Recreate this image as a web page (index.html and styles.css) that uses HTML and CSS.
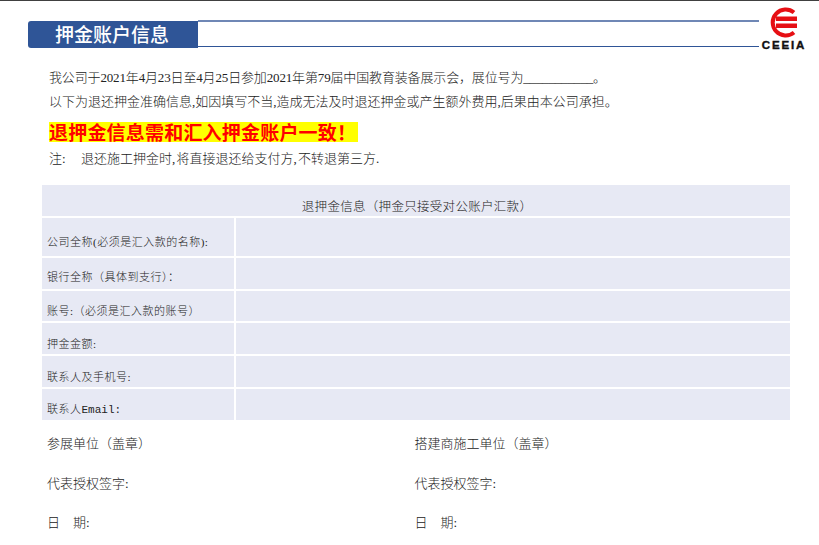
FILE: index.html
```html
<!DOCTYPE html>
<html lang="zh-CN">
<head>
<meta charset="utf-8">
<title>押金账户信息</title>
<link rel="stylesheet" href="styles.css">
</head>
<body>
<div class="page">
  <header class="head">
    <div class="title">押金账户信息</div>
    <div class="rule-box"></div>
    <div class="logo">
      <svg class="logo-mark" width="30" height="31" viewBox="0 0 30 31">
        <path d="M26 5.500A13 13 0 1 0 26 25.500" fill="none" stroke="#e60f14" stroke-width="4"/>
        <rect x="8" y="9.500" width="21" height="4.500" fill="#e60f14"/>
        <rect x="8" y="16.500" width="21" height="4.500" fill="#e60f14"/>
      </svg>
      <span class="logo-text">CEEIA</span>
    </div>
  </header>

  <section class="intro">
    <p class="line line-one">我公司于2021年4月23日至4月25日参加2021年第79届中国教育装备展示会，展位号为___________。</p>
    <p class="line line-two">以下为退还押金准确信息, 如因填写不当, 造成无法及时退还押金或产生额外费用, 后果由本公司承担。</p>
    <p class="alert">退押金信息需和汇入押金账户一致！</p>
    <p class="line note"><span class="note-key">注:</span>退还施工押金时, 将直接退还给支付方, 不转退第三方.</p>
  </section>

  <section class="form">
    <div class="form-head">退押金信息（押金只接受对公账户汇款）</div>
    <div class="row row-a"><div class="key key-a">公司全称(必须是汇入款的名称):</div><div class="val"></div></div>
    <div class="row row-b"><div class="key key-b">银行全称（具体到支行）：</div><div class="val"></div></div>
    <div class="row row-b"><div class="key">账号:（必须是汇入款的账号）</div><div class="val"></div></div>
    <div class="row row-c"><div class="key">押金金额:</div><div class="val"></div></div>
    <div class="row row-c"><div class="key">联系人及手机号:</div><div class="val"></div></div>
    <div class="row row-c"><div class="key key-last">联系人<span class="mono">Email:</span></div><div class="val"></div></div>
  </section>

  <section class="signs">
    <div class="sign">
      <p>参展单位（盖章）</p>
      <p>代表授权签字:</p>
      <p>日　期:</p>
    </div>
    <div class="sign">
      <p>搭建商施工单位（盖章）</p>
      <p>代表授权签字:</p>
      <p>日　期:</p>
    </div>
  </section>
</div>
</body>
</html>
```
FILE: styles.css
```css
* { box-sizing: border-box; }
html, body { margin: 0; padding: 0; background: #fff; }
body {
  font-family: "Liberation Serif", "Noto Sans CJK SC", serif;
  color: #222;
  overflow: hidden;
}
p { margin: 0; }
.page {
  width: 819px;
  height: 545px;
  border-top: 1px solid #404040;
  overflow: hidden;
}
.head {
  position: relative;
  display: flex;
  height: 46px;
  padding: 19px 0 0 28px;
}
.title {
  width: 170px;
  height: 27px;
  margin-top: 1px;
  background: #2f5597;
  border-radius: 3px 0 0 3px;
  color: #fff;
  font-family: "Noto Sans CJK SC", sans-serif;
  font-size: 19px;
  font-weight: 500;
  line-height: 25px;
  padding-left: 27px;
}
.rule-box {
  width: 563px;
  height: 27px;
  border-top: 2px solid #6f87b5;
  border-bottom: 1px solid #2f5597;
}
.logo {
  position: absolute;
  left: 759px;
  top: 6px;
  width: 50px;
  display: flex;
  flex-direction: column;
  align-items: center;
  background: #fff;
}
.logo-mark { display: block; margin-right: 3px; }
.logo-text {
  font-family: "Liberation Sans", sans-serif;
  font-weight: 700;
  font-size: 11.500px;
  letter-spacing: 1.900px;
  line-height: 10px;
  margin-top: 2px;
  color: #111;
  -webkit-text-stroke: 0.4px #111;
}
.intro { padding: 21px 0 0 49px; }
.line {
  font-size: 13px;
  line-height: 20px;
  font-weight: 300;
}
.line-one { letter-spacing: -0.15px; }
.line-two { margin-top: 4px; word-spacing: -3.250px; }
.alert {
  width: 309px;
  height: 20px;
  margin-top: 10px;
  background: #ff0;
  color: #f00;
  font-family: "Noto Sans CJK SC", sans-serif;
  font-size: 19px;
  font-weight: 700;
  letter-spacing: 0.2px;
  line-height: 20px;
  white-space: nowrap;
}
.note { margin-top: 7px; display: flex; word-spacing: -2px; }
.note-key { width: 32px; }
.form {
  width: 748px;
  margin: 16px 0 0 42px;
  display: flex;
  flex-direction: column;
  gap: 2px;
  font-weight: 300;
}
.form-head {
  height: 31px;
  background: #e7e9f4;
  font-size: 12.500px;
  letter-spacing: 0.3px;
  line-height: 44px;
  padding-left: 2px;
  text-align: center;
  overflow: hidden;
}
.row { display: flex; gap: 2px; }
.row-a { height: 38px; }
.row-b { height: 30.500px; }
.row-c { height: 31px; }
.key {
  width: 192px;
  background: #e7e9f4;
  padding: 0 0 3px 5px;
  font-size: 11px;
  letter-spacing: 0.5px;
  display: flex;
  align-items: flex-end;
  white-space: nowrap;
}
.key-a { padding-bottom: 7px; }
.key-b { padding-bottom: 5px; }
.key-last { padding-bottom: 4px; }
.mono { font-family: "Liberation Mono", monospace; letter-spacing: 0; }
.val { flex: 1; background: #e7e9f4; }
.signs {
  display: flex;
  padding: 14px 0 0 47px;
  font-size: 13px;
  font-weight: 300;
}
.sign { width: 367.500px; }
.sign p { height: 39.500px; line-height: 20px; white-space: nowrap; }
```
